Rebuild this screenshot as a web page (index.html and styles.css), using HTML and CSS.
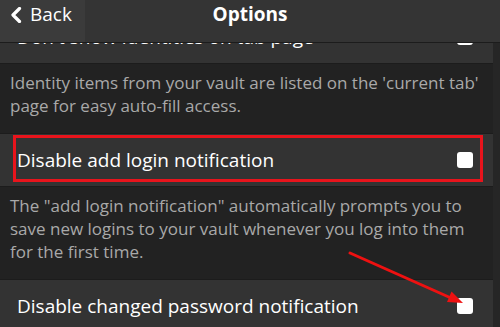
FILE: index.html
```html
<!DOCTYPE html>
<html>
<head>
<meta charset="utf-8">
<link rel="stylesheet" href="styles.css">
</head>
<body>
<div class="app">
  <header class="header">
    <a class="back">
      <svg class="chev" viewBox="0 0 12 16" width="12" height="16"><path d="M9.5 1.5 L3 8 L9.5 14.5" fill="none" stroke="#fff" stroke-width="3.2" stroke-linecap="round" stroke-linejoin="round"/></svg>
      <span>Back</span>
    </a>
    <h1 class="title">Options</h1>
  </header>
  <main class="scroll">
    <div class="list">
      <div class="row">
        <span class="label">Don't show Identities on tab page</span>
        <span class="check"></span>
      </div>
      <p class="desc">Identity items from your vault are listed on the 'current tab' page for easy auto-fill access.</p>
      <div class="row">
        <span class="label">Disable add login notification</span>
        <span class="check"></span>
        <span class="redbox"></span>
      </div>
      <p class="desc">The "add login notification" automatically prompts you to save new logins to your vault whenever you log into them for the first time.</p>
      <div class="row">
        <span class="label">Disable changed password notification</span>
        <span class="check"></span>
      </div>
    </div>
    <div class="track"></div>
    <svg class="arrow" viewBox="0 0 500 327" width="500" height="327">
      <line x1="350" y1="253" x2="451" y2="298" stroke="#ee1111" stroke-width="3" stroke-linecap="round"/>
      <polygon points="463,303 447,302 451.5,291.5" fill="#ee1111"/>
    </svg>
  </main>
</div>
</body>
</html>
```
FILE: styles.css
```css
* { box-sizing: border-box; }
html, body { margin: 0; padding: 0; }
body {
  width: 500px;
  height: 327px;
  overflow: hidden;
  background: #222222;
  font-family: "Open Sans", "Noto Sans", sans-serif;
  color: #ffffff;
}
.app { display: flex; flex-direction: column; height: 327px; }
.header {
  height: 43px;
  flex: none;
  display: flex;
  align-items: stretch;
  background: #343434;
  border-bottom: 1px solid #1c1c1c;
  position: relative;
  z-index: 2;
}
.back {
  width: 85px;
  background: #3b3b3b;
  display: flex;
  align-items: flex-start;
  padding: 4px 0 0 10px;
  gap: 8px;
  font-size: 19px;
  line-height: 20px;
  color: #fff;
}
.chev { margin-top: 3px; }
.title {
  flex: 1;
  margin: 0;
  text-align: center;
  font-size: 19px;
  font-weight: 700;
  line-height: 20px;
  padding: 4px 85px 0 0;
}
.scroll {
  flex: 1;
  display: flex;
  overflow: hidden;
  position: relative;
}
.list {
  width: 493px;
  flex: none;
  margin-top: -33px;
}
.track { flex: 1; background: #262626; }
.row {
  height: 54px;
  background: #333333;
  border-top: 1px solid #1c1c1c;
  border-bottom: 1px solid #1c1c1c;
  display: flex;
  align-items: center;
  justify-content: space-between;
  padding: 0 20px 0 17px;
  position: relative;
  font-size: 19px;
}
.label { color: #ffffff; }
.check {
  width: 16px;
  height: 16px;
  background: #ffffff;
  border-radius: 3px;
  flex: none;
}
.redbox {
  position: absolute;
  left: 13px;
  right: 10px;
  top: 1px;
  bottom: 4px;
  border: 3px solid #e8141c;
}
.desc {
  margin: 0;
  padding: 7px 10px 16px 10px;
  font-size: 17px;
  line-height: 23px;
  color: #a9a9a9;
  background: #222222;
}
.arrow {
  position: absolute;
  left: 0;
  top: -43px;
  pointer-events: none;
}
```
